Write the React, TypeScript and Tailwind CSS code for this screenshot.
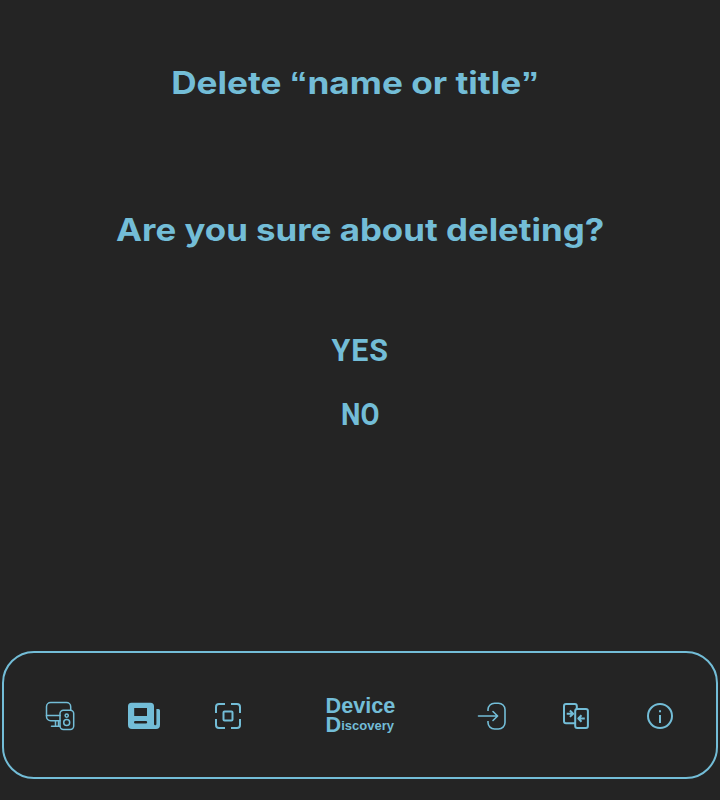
import type { ReactNode } from "react";

function Icon({ children, width = 1.5 }: { children: ReactNode; width?: number }) {
  return (
    <svg className="h-8 w-8 shrink-0" viewBox="0 0 32 32" fill="none" stroke="currentColor" strokeWidth={width} strokeLinecap="round" strokeLinejoin="round">
      {children}
    </svg>
  );
}

function DevicesIcon() {
  return (
    <Icon width={1.5}>
      <path d="M16 20.7H6.700a4.200 4.200 0 0 1-4.200-4.200V6.700a4.200 4.200 0 0 1 4.200-4.200h15.800a4.200 4.200 0 0 1 4.200 4.200v3.300" />
      <path d="M2.500 15.600H16M11.500 21v5M14.500 21v5M7.500 26.300H16" />
      <rect x="16" y="10.200" width="13.700" height="19.200" rx="3.400" />
      <circle cx="22.700" cy="15.600" r="1.600" />
      <circle cx="22.700" cy="22.500" r="3" />
    </Icon>
  );
}

function NewsIcon() {
  return (
    <Icon>
      <path fill="currentColor" stroke="none" fillRule="evenodd" d="M3.500 2.800h19a3.500 3.500 0 0 1 3.500 3.500v17.700a1.200 1.200 0 0 0 2.400 0V9h2.100A1.500 1.500 0 0 1 32 10.500V25a4 4 0 0 1-4 4H4a4 4 0 0 1-4-4V6.300a3.500 3.500 0 0 1 3.500-3.500ZM6.200 8v8h12.800V8Zm1.100 13a1.300 1.300 0 0 0 0 2.600h10.600a1.300 1.300 0 0 0 0-2.600Z" />
    </Icon>
  );
}

function ScanIcon() {
  return (
    <Icon width={2}>
      <path strokeLinecap="butt" d="M13 4H7a3 3 0 0 0-3 3v6M19 4h6a3 3 0 0 1 3 3v6M4 19v6a3 3 0 0 0 3 3h6M28 19v6a3 3 0 0 1-3 3h-6" />
      <rect x="11.500" y="11.500" width="9" height="9" rx="1" />
    </Icon>
  );
}

function EnterIcon() {
  return (
    <Icon width={1.600}>
      <path strokeLinecap="butt" d="M12 11V9.500a6.500 6.500 0 0 1 6.500-6.300h4A6.500 6.500 0 0 1 29 9.500v13a6.500 6.500 0 0 1-6.500 6.500h-4a6.500 6.500 0 0 1-6.500-6.500V21" />
      <path d="M2.500 16h18.700M17 11.500l4.600 4.500-4.600 4.500" />
    </Icon>
  );
}

function TransferIcon() {
  return (
    <Icon width={2}>
      <path d="M15 23.200H6a2 2 0 0 1-2-2V6a2 2 0 0 1 2-2h8.800a2 2 0 0 1 2 2v3" />
      <rect x="15.200" y="9" width="12.700" height="19" rx="2" />
      <path strokeLinecap="butt" d="M6.700 13.700h6M9.900 10.500l3.200 3.200-3.200 3.200M24.800 18.500h-6M21.500 15.300l-3.200 3.200 3.200 3.200" />
    </Icon>
  );
}

function InfoIcon() {
  return (
    <Icon width={2}>
      <circle cx="16" cy="16" r="12" />
      <path strokeLinecap="butt" d="M16 15v8M16 10.200v2" />
    </Icon>
  );
}

export default function App() {
  return (
    <div className="flex h-[800px] w-[720px] flex-col items-center overflow-hidden bg-[#242424] text-[#73bdd7]">
      <h1 className="mt-[63px] h-10 -translate-x-[5px] scale-x-[1.135] font-['Inter',sans-serif] text-[31px] leading-10 font-bold whitespace-nowrap">
        Delete <span className="font-['Liberation_Sans',sans-serif]">“</span>name or title<span className="font-['Liberation_Sans',sans-serif]">”</span>
      </h1>
      <h2 className="mt-[107px] h-10 scale-x-[1.124] font-['Inter',sans-serif] text-[31px] leading-10 font-bold whitespace-nowrap">
        Are you sure about deleting?
      </h2>
      <div className="mt-20 flex flex-col items-center gap-6 font-['Roboto',sans-serif] text-[32px] leading-10 font-bold">
        <button className="h-10 scale-x-[.95] pl-px tracking-[1px]">YES</button>
        <button className="h-10 scale-x-[.86]">NO</button>
      </div>
      <nav className="mt-auto mb-[21px] flex h-32 w-[716px] shrink-0 items-center justify-between rounded-[32px] border-2 border-[#73bdd7] px-10 pt-0.5">
        <DevicesIcon />
        <NewsIcon />
        <ScanIcon />
        <div className="flex w-32 flex-col items-center pb-px pl-[3px] font-['Liberation_Sans',Arial,sans-serif] font-bold">
          <div className="w-[72px]">
            <div className="h-[18px] text-[21.7px] leading-[18px]">Device</div>
            <div className="h-[19px] text-[21.7px] leading-[19px]">D<span className="align-[2px] text-[13px] leading-none">iscovery</span></div>
          </div>
        </div>
        <EnterIcon />
        <TransferIcon />
        <InfoIcon />
      </nav>
    </div>
  );
}
